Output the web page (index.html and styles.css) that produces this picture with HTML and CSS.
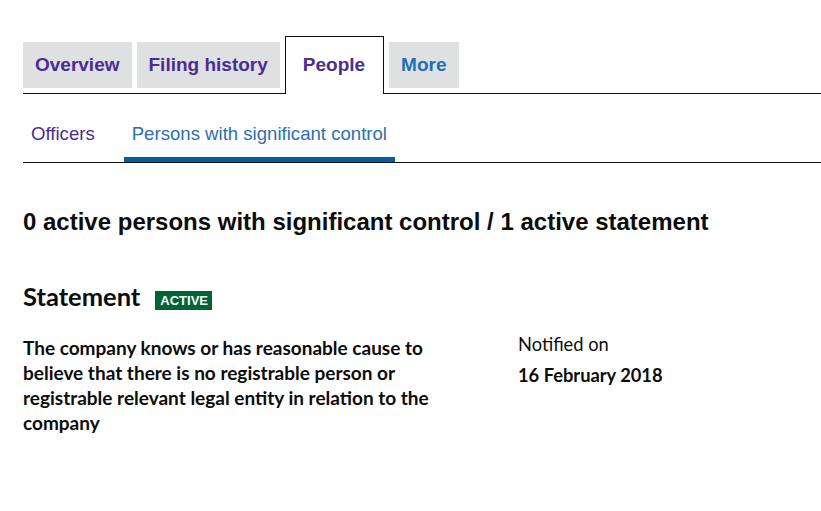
FILE: index.html
```html
<!DOCTYPE html>
<html>
<head>
  <title>People - Persons with significant control</title>
  <link rel="stylesheet" href="styles.css">
</head>
<body>
  <div class="page">
    <ul class="tabs">
      <li class="tab"><a href="#">Overview</a></li>
      <li class="tab"><a href="#">Filing history</a></li>
      <li class="tab active"><a href="#">People</a></li>
      <li class="tab more"><a href="#">More</a></li>
    </ul>

    <ul class="subnav">
      <li class="sub-item"><a href="#">Officers</a></li>
      <li class="sub-item current"><a href="#">Persons with significant control</a></li>
    </ul>

    <h2 class="summary">0 active persons with significant control / 1 active statement</h2>

    <div class="statement">
      <h3 class="statement-title">Statement <span class="badge">ACTIVE</span></h3>
      <div class="statement-grid">
        <p class="statement-text">The company knows or has reasonable cause to believe that there is no registrable person or registrable relevant legal entity in relation to the company</p>
        <dl class="notified">
          <dt>Notified on</dt>
          <dd>16 February 2018</dd>
        </dl>
      </div>
    </div>
  </div>
</body>
</html>
```

FILE: styles.css
```css
body { margin: 0; font-family: "Liberation Sans", Arial, sans-serif; color: #0b0c0c; background: #fff; }
.page { padding: 36px 0 0 23px; }
a { text-decoration: none; }

.tabs { list-style: none; margin: 0; padding: 0; display: flex; align-items: flex-end; gap: 5px; border-bottom: 1px solid #0b0c0c; }
.tab { background: #dee0e2; margin-bottom: 5px; height: 46px; display: flex; align-items: center; padding: 0 12px; }
.tab a { font-weight: bold; font-size: 19px; color: #4c2c92; }
.tab.more a { color: #1d70b8; }
.tab.active { background: #fff; border: 1px solid #0b0c0c; border-bottom: none; height: 56px; margin-bottom: -1px; padding: 0 18px 1px 17px; }

.subnav { list-style: none; margin: 0; padding: 0; display: flex; gap: 21px; border-bottom: 1px solid #0b0c0c; }
.sub-item { height: 63px; box-sizing: content-box; padding: 0 8px; border-bottom: 5px solid transparent; }
.sub-item a { display: block; font-size: 18.6px; line-height: 22px; padding-top: 29px; color: #4c2c92; }
.sub-item.current { border-bottom-color: #005ea5; }
.sub-item.current a { color: #2b6fb0; }

.summary { font-size: 24px; margin: 44px 0 0; line-height: 30px; }

.statement { font-family: Lato, "Liberation Sans", sans-serif; }
.statement-title { font-size: 25.5px; margin: 44px 0 0; line-height: 30px; display: flex; align-items: center; }
.badge { font-family: "Liberation Sans", Arial, sans-serif; background: #006435; color: #fff; font-size: 13px; font-weight: bold; padding: 2px 4px 2px 5px; line-height: 15px; margin-left: 15px; margin-top: 8px; }

.statement-grid { display: grid; grid-template-columns: 440px 1fr; column-gap: 55px; margin-top: 24px; }
.statement-text { margin: 0; font-size: 19px; font-weight: bold; line-height: 25px; }
.notified { margin: -6px 0 0; font-size: 18.3px; line-height: 31px; }
.notified dt { font-weight: normal; }
.notified dd { margin: 0; font-weight: bold; }
```
